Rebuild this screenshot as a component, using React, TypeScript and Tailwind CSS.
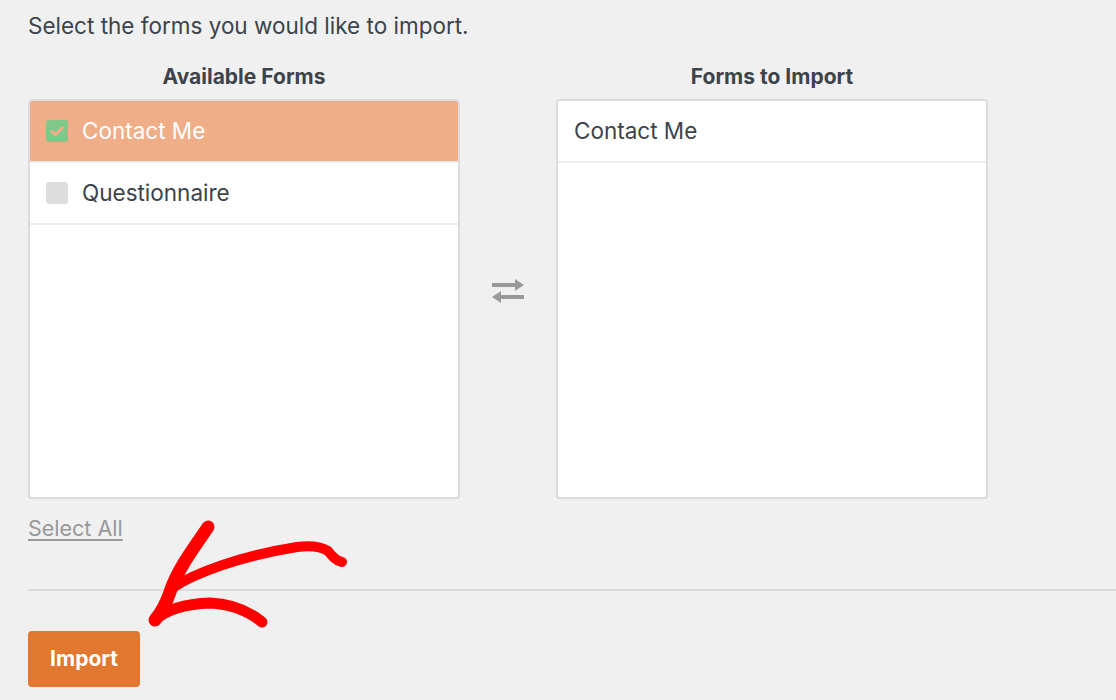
import React from "react";

const forms = [
  { name: "Contact Me", checked: true },
  { name: "Questionnaire", checked: false },
];

const SwapIcon = () => (
  <svg width="34" height="25" viewBox="0 0 34 25" fill="#999">
    {/* top arrow pointing right */}
    <rect x="1" y="4" width="25" height="4" />
    <polygon points="24,0 33,6 24,12" />
    {/* bottom arrow pointing left */}
    <rect x="8" y="16" width="25" height="4" />
    <polygon points="10,12 1,18 10,24" />
  </svg>
);

const Checkbox = ({ checked }: { checked: boolean }) =>
  checked ? (
    <span className="flex h-[22px] w-[22px] items-center justify-center rounded-[3px] bg-[#80c88a]">
      <svg width="15" height="12" viewBox="0 0 15 12" fill="none">
        <path
          d="M2 6.5 L5.5 9.5 L12.5 2.5"
          stroke="#efae88"
          strokeWidth="3"
          strokeLinecap="round"
          strokeLinejoin="round"
        />
      </svg>
    </span>
  ) : (
    <span className="h-[22px] w-[22px] rounded-[3px] bg-[#dddddd]" />
  );

const RedArrow = () => (
  <svg
    className="pointer-events-none absolute left-0 top-0"
    width="1116"
    height="700"
    viewBox="0 0 1116 700"
    fill="none"
  >
    <g stroke="#ff0000" strokeLinecap="round" strokeLinejoin="round">
      {/* upper stroke of the head */}
      <path d="M208,527 C196,545 178,568 170,592 C166,604 160,614 155,620" strokeWidth="13" />
      {/* shaft */}
      <path
        d="M172,588 C195,573 240,556 297,547 C312,545 322,547 328,551 C332,556 336,561 342,562"
        strokeWidth="10"
      />
      {/* lower stroke of the head */}
      <path d="M155,620 C166,610 182,604 210,603 C234,604 251,613 262,622" strokeWidth="11" />
    </g>
  </svg>
);

export default function App() {
  return (
    <div
      className="relative h-[700px] w-[1116px] overflow-hidden bg-[#f0f0f1] text-[#3c434a]"
      style={{ fontFamily: "Inter, 'Noto Sans', sans-serif" }}
    >
      <p className="ml-[28px] pt-[12px] text-[22.5px] leading-[28px]">
        Select the forms you would like to import.
      </p>

      <div className="ml-[28px] mt-[25px] flex">
        {/* Available forms */}
        <div className="w-[432px]">
          <h3 className="text-center text-[21px] font-bold leading-[24px]">Available Forms</h3>
          <div className="mt-[10px] h-[400px] overflow-hidden rounded-[4px] border-2 border-[#dcdcde] bg-white">
            {forms.map((f) => (
              <div
                key={f.name}
                className={`flex h-[62px] items-center gap-[14px] border-b-2 border-[#ececec] pl-[16px] text-[22.5px] ${
                  f.checked ? "bg-[#efae88] text-white" : "text-[#3c434a]"
                }`}
              >
                <Checkbox checked={f.checked} />
                <span>{f.name}</span>
              </div>
            ))}
          </div>
        </div>

        {/* Swap icon */}
        <div className="flex w-[96px] justify-center pt-[214px]">
          <SwapIcon />
        </div>

        {/* Forms to import */}
        <div className="w-[432px]">
          <h3 className="text-center text-[21px] font-bold leading-[24px]">Forms to Import</h3>
          <div className="mt-[10px] h-[400px] overflow-hidden rounded-[4px] border-2 border-[#dcdcde] bg-white">
            <div className="flex h-[62px] items-center border-b-2 border-[#ececec] pl-[16px] text-[22.5px]">
              Contact Me
            </div>
          </div>
        </div>
      </div>

      <a className="ml-[28px] mt-[16px] inline-block text-[21.5px] leading-[26px] text-[#999] underline underline-offset-[3px]">
        Select All
      </a>

      <div className="ml-[28px] mt-[47px] border-t-2 border-[#dcdcde]" />

      <button className="ml-[28px] mt-[40px] block h-[56px] w-[112px] rounded-[4px] bg-[#e27730] text-[21px] font-bold text-white">
        Import
      </button>

      <RedArrow />
    </div>
  );
}
